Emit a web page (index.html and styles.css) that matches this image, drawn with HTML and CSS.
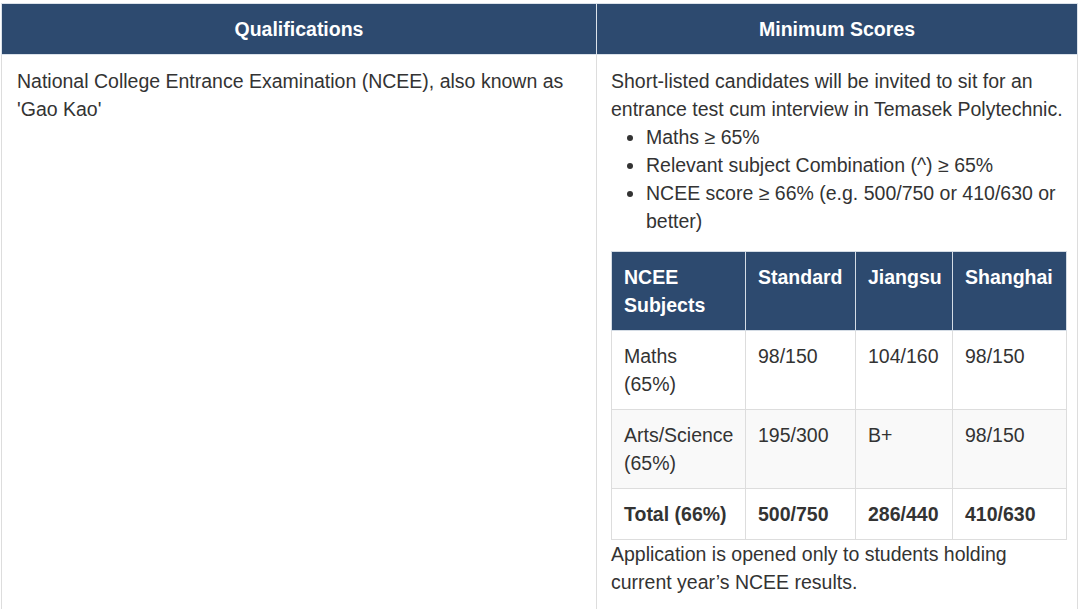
FILE: index.html
```html
<!DOCTYPE html>
<html lang="en">
<head>
  <meta charset="UTF-8">
  <title>Entry Requirements - NCEE</title>
  <link rel="stylesheet" href="styles.css">
</head>
<body>

<table class="req-table">
  <colgroup>
    <col class="col-qual">
    <col class="col-score">
  </colgroup>
  <thead>
    <tr>
      <th>Qualifications</th>
      <th>Minimum Scores</th>
    </tr>
  </thead>
  <tbody>
    <tr>
      <td>National College Entrance Examination (NCEE), also known as 'Gao Kao'</td>
      <td class="score-cell">
        Short-listed candidates will be invited to sit for an entrance test cum interview in Temasek Polytechnic.
        <ul class="req-list">
          <li>Maths &ge; 65%</li>
          <li>Relevant subject Combination (^) &ge; 65%</li>
          <li>NCEE score &ge; 66% (e.g. 500/750 or 410/630 or better)</li>
        </ul>

        <table class="ncee-table">
          <colgroup>
            <col style="width:134px">
            <col style="width:110px">
            <col style="width:97px">
            <col>
          </colgroup>
          <thead>
            <tr>
              <th>NCEE Subjects</th>
              <th>Standard</th>
              <th>Jiangsu</th>
              <th>Shanghai</th>
            </tr>
          </thead>
          <tbody>
            <tr>
              <td>Maths (65%)</td>
              <td>98/150</td>
              <td>104/160</td>
              <td>98/150</td>
            </tr>
            <tr class="striped">
              <td>Arts/Science (65%)</td>
              <td>195/300</td>
              <td>B+</td>
              <td>98/150</td>
            </tr>
            <tr class="total">
              <td>Total (66%)</td>
              <td>500/750</td>
              <td>286/440</td>
              <td>410/630</td>
            </tr>
          </tbody>
        </table>
        Application is opened only to students holding current year&rsquo;s NCEE results.
      </td>
    </tr>
  </tbody>
</table>

</body>
</html>
```

FILE: styles.css
```css
body {
  font-family: "Liberation Sans", Arial, sans-serif;
  font-size: 19.5px;
  line-height: 28px;
  color: #333;
  margin: 0;
  padding: 3px 0 0 1px;
  background-color: #fff;
}
.req-table {
  width: 1077px;
  border-collapse: collapse;
  table-layout: fixed;
}
.col-qual {
  width: 595px;
}
.req-table > thead > tr > th {
  background-color: #2d4a6f;
  color: #fff;
  font-weight: bold;
  text-align: center;
  height: 50px;
  padding: 0 12px;
  border: 1px solid #dbe2ea;
}
.req-table > tbody > tr > td {
  vertical-align: top;
  padding: 12px 14px 14px 15px;
  border: 1px solid #ddd;
  height: 560px;
}
.req-table > tbody > tr > td.score-cell {
  padding-left: 14px;
  padding-right: 10px;
}
.req-list {
  margin: 0 0 16px 0;
  padding-left: 35px;
}
.ncee-table {
  width: 100%;
  border-collapse: collapse;
  table-layout: fixed;
}
.ncee-table th,
.ncee-table td {
  text-align: left;
  vertical-align: top;
  padding: 11px 12px;
  border: 1px solid #ddd;
}
.ncee-table th {
  background-color: #2d4a6f;
  color: #fff;
  font-weight: bold;
  border-color: #d4dce5;
}
.ncee-table .striped td {
  background-color: #f9f9f9;
}
.ncee-table .total td {
  font-weight: bold;
}
```
